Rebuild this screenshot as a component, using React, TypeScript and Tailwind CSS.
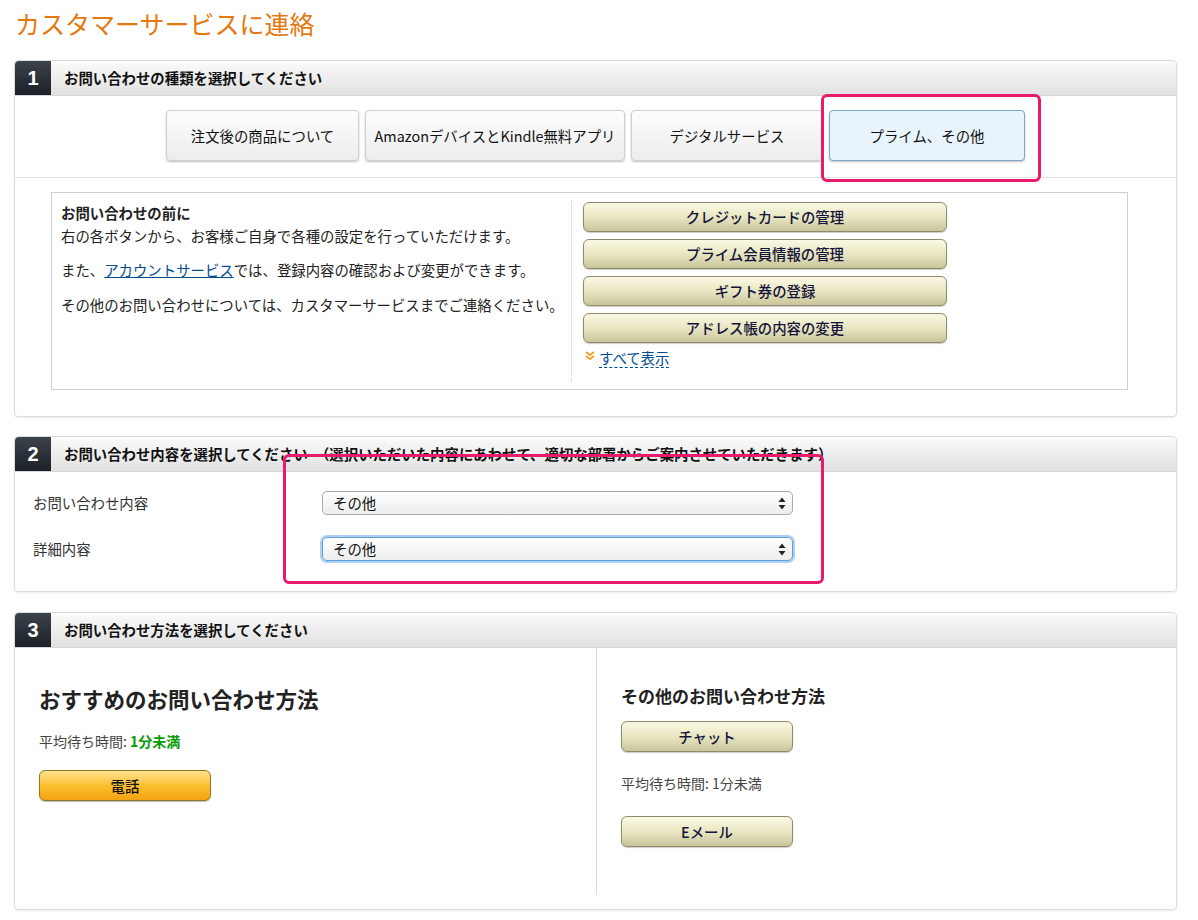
import React from 'react';

const font = { fontFamily: '"Noto Sans CJK JP", "Liberation Sans", sans-serif' };

function SectionHeader({ num, children }: { num: string; children: React.ReactNode }) {
  return (
    <div className="flex h-[35px] items-stretch rounded-t-[4px] bg-gradient-to-b from-[#fbfbfb] to-[#e1e1e1] border-b border-[#d6d6d6]">
      <div className="flex w-[36px] items-center justify-center rounded-tl-[4px] bg-gradient-to-b from-[#3d434c] to-[#1c2027] text-[20px] font-bold text-white [font-family:'Liberation_Sans',sans-serif]">
        {num}
      </div>
      <div className="flex items-center pl-[13px] text-[14.4px] font-bold text-[#111]">{children}</div>
    </div>
  );
}

function Tab({ label, width, active }: { label: string; width: string; active?: boolean }) {
  return (
    <button
      className={
        'h-[51px] rounded-[4px] border text-[14.4px] text-[#111] shadow-[0_1px_2px_rgba(0,0,0,0.25)] ' +
        width +
        (active
          ? ' border-[#7ea6c6] bg-[#e8f3fb]'
          : ' border-[#cfcfcf] bg-gradient-to-b from-[#fdfdfd] to-[#ececec]')
      }
    >
      {label}
    </button>
  );
}

function KhakiButton({ label, className = '' }: { label: string; className?: string }) {
  return (
    <button
      className={
        'flex h-[30px] items-center justify-center rounded-[6px] border border-[#8d8b69] bg-gradient-to-b from-[#fbf9e4] via-[#e9e6c3] to-[#c9c59b] text-[14.4px] font-medium text-[#14143a] shadow-[0_1px_1px_rgba(0,0,0,0.2)] ' +
        className
      }
    >
      {label}
    </button>
  );
}

function SelectBox({ focused }: { focused?: boolean }) {
  return (
    <div
      className={
        'flex h-[24px] w-[471px] items-center justify-between rounded-[5px] border bg-gradient-to-b from-white to-[#ededed] pl-[10px] pr-[6px] text-[14.4px] text-[#111] ' +
        (focused ? 'border-[#5a9ddc] shadow-[0_0_0_2px_rgba(110,170,230,0.55)]' : 'border-[#a9a9a9]')
      }
    >
      <span>その他</span>
      <svg width="8" height="13" viewBox="0 0 8 13">
        <path d="M4 0.5 L7.5 5 L0.5 5 Z" fill="#222" />
        <path d="M4 12.5 L7.5 8 L0.5 8 Z" fill="#222" />
      </svg>
    </div>
  );
}

export default function App() {
  return (
    <div className="min-h-[920px] bg-white pl-[14px] pb-[10px]" style={font}>
      <div className="w-[1163px]">
        {/* Title */}
        <div className="h-[60px] pl-[1px] pt-[6px]">
          <h1 className="text-[25px] leading-[34px] text-[#e47911]">カスタマーサービスに連絡</h1>
        </div>

        {/* Section 1 */}
        <div className="relative rounded-[4px] border border-[#dcdcdc] shadow-[0_1px_2px_rgba(0,0,0,0.08)]">
          <SectionHeader num="1">お問い合わせの種類を選択してください</SectionHeader>
          <div className="flex justify-center gap-[6px] border-b border-[#e4e4e4] pt-[14px] pb-[16px]">
            <Tab label="注文後の商品について" width="w-[193px]" />
            <Tab label="AmazonデバイスとKindle無料アプリ" width="w-[260px]" />
            <Tab label="デジタルサービス" width="w-[192px]" />
            <Tab label="プライム、その他" width="w-[196px]" active />
          </div>
          <div className="pl-[36px] pt-[14px] pb-[26px]">
            <div className="flex h-[198px] w-[1077px] border border-[#cfcfcf]">
              <div className="w-[519px] pl-[9px] pt-[8px] text-[14.4px] leading-[23px] text-[#222]">
                <p className="font-bold">お問い合わせの前に</p>
                <p>右の各ボタンから、お客様ご自身で各種の設定を行っていただけます。</p>
                <p className="mt-[11px]">
                  また、<a className="text-[#004b91] underline">アカウントサービス</a>
                  では、登録内容の確認および変更ができます。
                </p>
                <p className="mt-[12px]">その他のお問い合わせについては、カスタマーサービスまでご連絡ください。</p>
              </div>
              <div className="my-[7px] border-l border-dotted border-[#cfcfcf] pl-[11px] pt-[2px]">
                <div className="flex flex-col gap-[7px]">
                  <KhakiButton label="クレジットカードの管理" className="w-[364px]" />
                  <KhakiButton label="プライム会員情報の管理" className="w-[364px]" />
                  <KhakiButton label="ギフト券の登録" className="w-[364px]" />
                  <KhakiButton label="アドレス帳の内容の変更" className="w-[364px]" />
                </div>
                <div className="mt-[6px] flex items-center gap-[4px] pl-[2px]">
                  <svg width="10" height="10" viewBox="0 0 10 10" className="-mt-[6px]">
                    <path d="M1 1 L5 4 L9 1" stroke="#f0a030" strokeWidth="2" fill="none" />
                    <path d="M1 5 L5 8 L9 5" stroke="#f0a030" strokeWidth="2" fill="none" />
                  </svg>
                  <a className="border-b border-dashed border-[#004b91] text-[14.4px] leading-[18px] text-[#004b91]">
                    すべて表示
                  </a>
                </div>
              </div>
            </div>
          </div>
          {/* highlight */}
          <div className="absolute left-[806px] top-[33px] h-[88px] w-[220px] rounded-[6px] border-[3px] border-[#e9196b]" />
        </div>

        {/* Section 2 */}
        <div className="relative mt-[19px] rounded-[4px] border border-[#dcdcdc] shadow-[0_1px_2px_rgba(0,0,0,0.08)]">
          <SectionHeader num="2">
            お問い合わせ内容を選択してください　（選択いただいた内容にあわせて、適切な部署からご案内させていただきます）
          </SectionHeader>
          <div className="flex flex-col gap-[22px] pl-[18px] pt-[19px] pb-[30px] text-[14.4px] text-[#333]">
            <div className="flex items-center">
              <span className="w-[289px]">お問い合わせ内容</span>
              <SelectBox />
            </div>
            <div className="flex items-center">
              <span className="w-[289px]">詳細内容</span>
              <SelectBox focused />
            </div>
          </div>
          <div className="absolute left-[268px] top-[17px] h-[130px] w-[541px] rounded-[6px] border-[3px] border-[#e9196b]" />
        </div>

        {/* Section 3 */}
        <div className="mt-[20px] rounded-[4px] border border-[#dcdcdc] shadow-[0_1px_2px_rgba(0,0,0,0.08)]">
          <SectionHeader num="3">お問い合わせ方法を選択してください</SectionHeader>
          <div className="flex h-[261px]">
            <div className="mb-[14px] w-[582px] border-r border-[#d8d8d8] pl-[24px] pt-[36px]">
              <h2 className="text-[21.5px] font-bold leading-[30px] text-[#222]">おすすめのお問い合わせ方法</h2>
              <p className="mt-[17px] text-[14px] text-[#444]">
                平均待ち時間: <span className="font-bold text-[#079b07]">1分未満</span>
              </p>
              <button className="mt-[18px] flex h-[31px] w-[172px] items-center justify-center rounded-[6px] border border-[#8f7331] bg-gradient-to-b from-[#fde28a] via-[#fcc02d] to-[#f3a20e] text-[14.4px] font-medium text-[#111] shadow-[0_1px_1px_rgba(0,0,0,0.25)]">
                電話
              </button>
            </div>
            <div className="pl-[24px] pt-[36px]">
              <h3 className="text-[17px] font-bold leading-[24px] text-[#222]">その他のお問い合わせ方法</h3>
              <KhakiButton label="チャット" className="mt-[13px] w-[172px] h-[31px]" />
              <p className="mt-[21px] text-[14px] text-[#444]">平均待ち時間: 1分未満</p>
              <KhakiButton label="Eメール" className="mt-[22px] w-[172px] h-[31px]" />
            </div>
          </div>
        </div>
      </div>
    </div>
  );
}
